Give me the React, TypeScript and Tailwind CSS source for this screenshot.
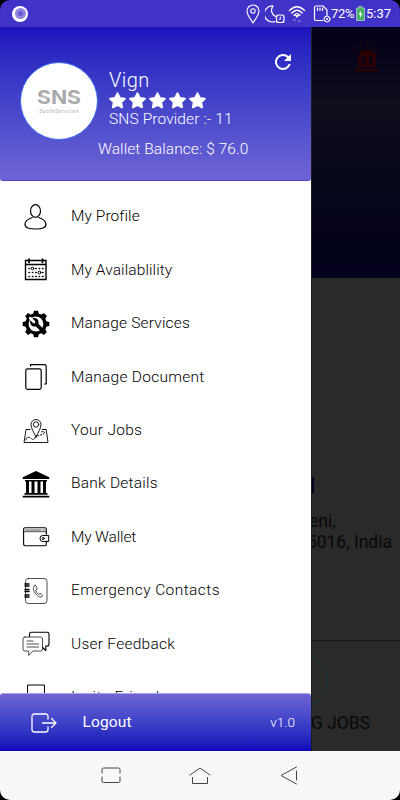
import type { ReactNode } from 'react'
import { clsx } from 'clsx'

interface IconProps {
  className?: string
  children: ReactNode
  box?: string
}

function Icon({ className, children, box = '0 0 28 28' }: IconProps) {
  return (
    <svg
      viewBox={box}
      fill="none"
      stroke="currentColor"
      strokeWidth="1"
      strokeLinecap="round"
      strokeLinejoin="round"
      className={clsx('shrink-0', className ?? 'size-7')}
    >
      {children}
    </svg>
  )
}

const GEAR_TEETH = [0, 45, 90, 135, 180, 225, 270, 315]
const STAR = 'M8 1.3 10.1 5.6 14.8 6.3 11.4 9.6 12.2 14.3 8 12.1 3.8 14.3 4.6 9.6 1.2 6.3 5.9 5.6Z'

const icons = {
  profile: (
    <Icon>
      <ellipse cx="13.5" cy="8" rx="5" ry="6.3" strokeWidth="1.2" />
      <path d="M10.3 14.5C6.5 15.8 3.3 17.5 3 21C2.7 25 7.500 26 13.500 26S24.300 25 24 21C23.700 17.500 20.500 15.800 16.700 14.500" strokeWidth="1.2" />
    </Icon>
  ),
  calendar: (
    <Icon>
      <path d="M3.500 4.500H24V23.500H3.500ZM3.500 8.500H24" strokeWidth="1.4" strokeLinejoin="miter" />
      <path d="M7 3V6.500M20.500 3V6.500" strokeWidth="1.7" />
      <path d="M7 12.500H21M7 16.500H21M7 20.500H21" strokeWidth="1.6" strokeDasharray=".4 3" />
      <circle cx="10.500" cy="12.500" r="1.3" fill="white" />
      <circle cx="17.500" cy="16.500" r="1.4" fill="white" />
    </Icon>
  ),
  services: (
    <Icon>
      <g fill="currentColor" stroke="none">
        {GEAR_TEETH.map(deg => (
          <path key={deg} d="M11 5 11.9 .7H16.1L17 5Z" transform={`rotate(${deg} 14 14)`} />
        ))}
        <circle cx="14" cy="14" r="10.700" />
      </g>
      <circle cx="14" cy="14" r="7.400" fill="white" stroke="none" />
      <path d="M13 13 21 21" strokeWidth="3.800" />
      <circle cx="12.300" cy="12.300" r="4.200" fill="currentColor" stroke="none" />
      <path d="M8.300 8.300 12 12" stroke="white" strokeWidth="2.800" />
    </Icon>
  ),
  document: (
    <Icon>
      <rect x="3.800" y="5.800" width="15.400" height="20.600" rx="1.800" strokeWidth="1.2" />
      <path d="M8.500 3V1.700H22.500Q24.200 1.700 24.200 3.400V21H22.500" strokeWidth="1.2" />
    </Icon>
  ),
  jobs: (
    <Icon>
      <path d="M8 12.500H4L2 25.500H26L24.200 12.500H20M14 20C12 15.500 9 11.500 9 7.500A5 5 0 0 1 19 7.500C19 11.500 16 15.500 14 20Z" strokeWidth=".9" />
      <circle cx="14" cy="7.500" r="2.700" strokeWidth=".9" />
      <path d="M4 23C4 18 9 21 10 22C13 24 12 20 15 19S20 18 22 16.500C24 15 21 14 19 15" strokeWidth=".9" strokeDasharray="2 1.600" />
    </Icon>
  ),
  bank: (
    <Icon>
      <g fill="currentColor" stroke="none">
        <path d="M14 1 27.300 7.200V9H.7V7.200ZM3 10H25V11.600H3ZM2.500 23H25.500V24.800H2.500ZM.7 25.700H27.300V27.500H.7Z" />
        <path d="M4 11H7V23H4ZM9.500 11H12.500V23H9.500ZM15.500 11H18.500V23H15.500ZM21 11H24V23H21Z" />
      </g>
    </Icon>
  ),
  wallet: (
    <Icon>
      <path d="M24.300 11.500V6Q24.300 4.700 23 4.700H3.200Q1.600 4.700 1.600 6.300V21Q1.600 22.700 3.200 22.700H23Q24.300 22.700 24.300 21.500V18" strokeWidth="1.1" />
      <path d="M3.500 7H19M21 7H22.500M2 8.700H24" strokeWidth=".7" />
      <path d="M26.300 12.500H21A3 3 0 0 0 21 18.500H26.300Z" />
      <circle cx="21.300" cy="15.500" r="1" />
    </Icon>
  ),
  contacts: (
    <Icon>
      <rect x="3.500" y="1.500" width="21.500" height="25" rx="3" strokeWidth=".7" />
      <path d="M3 7H7M3 9H7M3 12.500H7M3 14.500H7M3 18H7M3 20H7" strokeWidth="1.500" />
      <path d="M13 8.500C10.500 9.500 11 13 13 16S18 21 20 19.500C21 18.500 19.500 16.500 18 16.500L16.800 17.500C15 16.500 14.200 14.500 13.800 13L15 12C15 10 14.500 8.300 13 8.500Z" strokeWidth=".7" />
    </Icon>
  ),
  feedback: (
    <Icon>
      <path d="M7.500 6.500V4Q7.500 2.200 9.500 2.200H25Q27 2.200 27 4V14Q27 16 25 16H23.800V20.500L20.500 17.500" strokeWidth="1.1" />
      <path d="M3 7H18.500Q20.500 7 20.500 9V19Q20.500 21 18.500 21H11L6.700 25.500V21H3Q1 21 1 19V9Q1 7 3 7ZM5 11H11M5 14H16.500M5 17H16.500" strokeWidth=".7" />
    </Icon>
  ),
  invite: (
    <Icon>
      <path d="M5.500 27V1H22.500V27" strokeWidth="1" strokeLinejoin="miter" />
    </Icon>
  ),
}

const menu = [
  { label: 'My Profile', icon: icons.profile, tracking: 'tracking-[0.08px]' },
  { label: 'My Availablility', icon: icons.calendar, tracking: 'tracking-[0.1px]' },
  { label: 'Manage Services', icon: icons.services, tracking: 'tracking-[0.18px]' },
  { label: 'Manage Document', icon: icons.document, tracking: 'tracking-[0.26px]' },
  { label: 'Your Jobs', icon: icons.jobs, tracking: 'tracking-[0.28px]' },
  { label: 'Bank Details', icon: icons.bank, tracking: 'tracking-[0.24px]' },
  { label: 'My Wallet', icon: icons.wallet, tracking: 'tracking-[-0.15px]' },
  { label: 'Emergency Contacts', icon: icons.contacts, tracking: 'tracking-[0.42px]' },
  { label: 'User Feedback', icon: icons.feedback, tracking: 'tracking-[0.26px]' },
  { label: 'Invite Friend', icon: icons.invite, tracking: 'tracking-[0.45px]' },
]

function StatusBar() {
  return (
    <div className="flex h-[27px] shrink-0 items-center bg-[#4233c8] pr-[9px] pl-3 text-white">
      <div className="flex size-4 items-center justify-center rounded-full bg-white">
        <div className="flex size-[11px] items-center justify-center rounded-full bg-[#8f86df]">
          <div className="size-[5px] rounded-full bg-[#6559cd]" />
        </div>
      </div>
      <Icon box="0 0 14 20" className="ml-auto h-5 w-3.5">
        <path d="M7 19C4 14 1 11 1 7A6 6 0 0 1 13 7C13 11 10 14 7 19Z" strokeWidth="1.1" />
        <circle cx="7" cy="7" r="2.200" strokeWidth="1.1" />
      </Icon>
      <Icon box="0 0 20 20" className="ml-[5px] size-5">
        <path d="M8 2A8 8 0 1 0 10 17.500M8 2C5.500 5.500 6 10 10.500 12.500" strokeWidth="1.2" />
        <rect x="11.500" y="11" width="7.500" height="7.500" rx="2.500" strokeWidth="1.2" />
        <path d="M15.300 13V15.300H14.300M11.500 11 12 11.500M19 11 18.500 11.500M11.500 18.500 12 18M19 18.500 18.500 18" />
      </Icon>
      <Icon box="0 0 18 18" className="ml-[3px] size-[18px]">
        <path d="M1.500 5.500Q9-2 16.500 5.500M3.800 8Q9 2.500 14.200 8M6 10.300Q9 7 12 10.300" strokeWidth="1.3" />
        <path d="M6.500 10 9 13 11.500 10Z" fill="white" stroke="none" />
        <path d="M4.500 14H8.500L6.500 17ZM9.500 17H13.500L11.500 14Z" fill="#7067d8" stroke="none" />
      </Icon>
      <Icon box="0 0 18 18" className="ml-[7px] size-[18px]">
        <path d="M10 15.500H3Q1.500 15.500 1.500 14V2.500Q1.500 1 3 1H10L14 5V10.500M4.500 3V5.500M7 3V5.500M9.500 3V5.500" strokeWidth="1.2" />
        <circle cx="14" cy="14" r="3" />
        <path d="M12.800 12.800 15.200 15.200M15.200 12.800 12.800 15.200" strokeWidth=".8" />
      </Icon>
      <span className="w-6 text-[13px] tracking-[-0.3px] whitespace-nowrap">72%</span>
      <Icon box="0 0 9 15" className="ml-[1px] h-[15px] w-[9px]">
        <path d="M3 .5H6V2H8.500V14.500H.5V2H3Z" fill="#48b264" stroke="#b4c7dc" strokeWidth=".8" />
        <path d="M5 4.500 2.500 8.500H4.200L3.800 12 6.500 7.500H4.700Z" fill="white" stroke="none" />
      </Icon>
      <span className="ml-[1px] w-[25px] text-[13px] whitespace-nowrap">5:37</span>
    </div>
  )
}

// wordmark: wide letters with a thin cut through the middle
function Logo() {
  return (
    <div className="flex size-[78px] shrink-0 flex-col items-center rounded-full border border-[#3b6df0] bg-white pt-[26px] text-[#aaa]">
      <svg viewBox="0 0 44 16" className="h-4 w-11 shrink-0 overflow-visible">
        <text x="0" y="15" textLength="44" lengthAdjust="spacingAndGlyphs" fill="currentColor" className="font-[Inter] text-[19px] font-bold">
          SNS
        </text>
        <path d="M0 8.200H14M30 8.200H44" stroke="white" strokeWidth=".6" />
      </svg>
      <span className="mt-[3px] font-[Inter] text-[4.8px] leading-[6px] tracking-[0.5px]">SpotnServices</span>
    </div>
  )
}

function ProfileHeader() {
  return (
    <div className="flex h-[154px] shrink-0 rounded-b-[3px] border-b border-[#5143c5] bg-linear-to-b from-[#2010bd] to-[#7064d5] pt-[35px] pl-5 text-white">
      <Logo />
      <div className="relative ml-[11px] flex-1">
        <div className="mt-[7px] text-[20px] leading-[22px] font-light tracking-[0.4px]">Vign</div>
        <div className="mt-[1px] flex gap-[3px]">
          {[1, 2, 3, 4, 5].map(n => (
            <svg key={n} viewBox="0 0 16 16" className="size-[17px] fill-white stroke-white" strokeWidth="2" strokeLinejoin="round">
              <path d={STAR} />
            </svg>
          ))}
        </div>
        <div className="text-[15.5px] leading-5 font-light tracking-[0.12px]">SNS Provider :- 11</div>
        <div className="mt-[10px] -ml-[11px] text-[15.5px] leading-5 font-light tracking-[0.08px] whitespace-nowrap">Wallet Balance: $ 76.0</div>
        <svg viewBox="0 0 24 24" className="absolute -top-3 right-[16px] size-6 fill-white">
          <path d="M17.650 6.350A8 8 0 1 0 19.730 14H17.650A6 6 0 1 1 16.220 7.780L13 11H20V4Z" />
        </svg>
      </div>
    </div>
  )
}

function Drawer() {
  return (
    <aside className="flex w-[311px] shrink-0 flex-col bg-white">
      <ProfileHeader />
      <nav className="min-h-0 flex-1 overflow-hidden pt-[9.4px]">
        {menu.map(item => (
          <div key={item.label} className="flex h-[53.4px] items-center pl-[21.5px] text-black">
            {item.icon}
            <span className={clsx('ml-[21.5px] text-[15.5px] font-light whitespace-nowrap', item.tracking)}>{item.label}</span>
          </div>
        ))}
      </nav>
      <div className="flex h-[58px] shrink-0 items-center rounded-t-[3px] border-t border-[#aaa3e4] bg-linear-to-b from-[#7064d5] to-[#1300b9] pr-4 pl-[31px] text-white">
        <Icon box="0 0 26 20" className="h-5 w-[26px]">
          <path d="M17 6V3.500Q17 1 14.500 1H3.500Q1 1 1 3.500V16.500Q1 19 3.500 19H14.500Q17 19 17 16.500V14M11.500 10H25M20.500 5.500 25 10 20.500 14.500" strokeWidth="1.3" />
        </Icon>
        <span className="ml-[25.5px] text-[15.5px] tracking-[0.15px]">Logout</span>
        <span className="ml-auto text-[13.5px] font-light">v1.0</span>
      </div>
    </aside>
  )
}

// what stays visible of the home screen behind the open drawer
function HomeBehindDrawer() {
  return (
    <main className="flex flex-1 flex-col overflow-hidden border-l border-[#1d1d1d] bg-[#2a2a2a] text-[#080808]">
      <div className="h-[251px] shrink-0 bg-linear-to-b from-[#030019] via-[#100e1c] via-30% to-[#02001a] pt-4 pl-[41px]">
        <Icon box="0 0 28 30" className="h-[30px] w-7 text-[#260002]">
          <g fill="currentColor" stroke="none">
            <path d="M5 24V14Q5 6.500 14 6.500T23 14V24ZM3 25.500H24.500L26 28.500H1.500Z" />
            <circle cx="14" cy="2.500" r="1.200" />
            <circle cx="7" cy="4.500" r="1.200" />
            <circle cx="21" cy="4.500" r="1.200" />
            <circle cx="2" cy="8.500" r="1.200" />
            <circle cx="26" cy="8.500" r="1.200" />
          </g>
          <path d="M9 13V21Q13 20 12.500 17T9 13ZM19 13V21Q15 20 15.500 17T19 13Z" fill="#080717" stroke="none" />
        </Icon>
      </div>
      <div className="mt-[199px] h-4 w-0.5 bg-[#080322]" />
      <div className="mt-[18px] flex flex-col text-[17.5px] leading-[21px]">
        <span className="-ml-[3px]">eni,</span>
        <span className="mr-2 self-end whitespace-nowrap">5016, India</span>
      </div>
      <div className="mt-[87px] flex flex-1 flex-col border-t border-[#161616]">
        <div className="mt-[13px] -ml-[37px] size-[53px] shrink-0 rounded-full border border-[#0a3a37]" />
        <div className="mt-1 mr-[30px] self-end text-[17.5px] leading-6 whitespace-nowrap">G JOBS</div>
      </div>
    </main>
  )
}

function NavigationBar() {
  return (
    <div className="flex h-[49px] shrink-0 items-center bg-[#f7f7f7] pl-[101px] text-[#444]">
      <Icon box="0 0 20 17" className="h-[17px] w-5">
        <path d="M1 6V2.500Q1 1 2.500 1H17.500Q19 1 19 2.500V6M1 10V14Q1 15.500 2.500 15.500H17.500Q19 15.500 19 14V10" />
      </Icon>
      <Icon box="0 0 22 18" className="ml-[68px] h-[18px] w-[22px]">
        <path d="M1 8 11 1 21 8M3.500 10.500V16.500H18.500V10.500" />
      </Icon>
      <Icon box="0 0 18 19" className="ml-[69px] h-[19px] w-[18px]">
        <path d="M16.500 1 1 9.500 16.500 18M16.500 5V14" />
      </Icon>
    </div>
  )
}

export default function App() {
  return (
    <div className="h-[800px] w-[400px] bg-black font-[Roboto,sans-serif]">
      <div className="flex h-full flex-col overflow-hidden rounded-[10px]">
        <StatusBar />
        <div className="flex h-[724px] shrink-0">
          <Drawer />
          <HomeBehindDrawer />
        </div>
        <NavigationBar />
      </div>
    </div>
  )
}
